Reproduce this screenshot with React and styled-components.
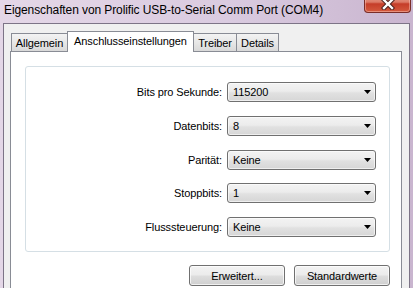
import React from 'react';
import styled, { createGlobalStyle } from 'styled-components';

const GlobalStyle = createGlobalStyle`
  html, body {
    margin: 0;
    padding: 0;
  }
  body {
    font-family: "Liberation Sans", Arial, sans-serif;
  }
`;

const DIALOG_FONT = `
  font-family: "Liberation Sans", Arial, sans-serif;
  font-size: 11px;
  letter-spacing: -0.1px;
  color: #000;
`;

const Window = styled.div`
  width: 413px;
  height: 288px;
  overflow: hidden;
  display: flex;
  flex-direction: column;
  background: linear-gradient(90deg, #e4d7e7 0%, #dacbe0 55%, #c9b5cf 100%);
`;

const TitleBar = styled.div`
  height: 23px;
  flex: none;
  display: flex;
  align-items: flex-start;
`;

const Title = styled.div`
  padding: 3px 0 0 4px;
  font-size: 12px;
  line-height: 14px;
  letter-spacing: -0.1px;
  color: #000;
  white-space: nowrap;
`;

const CloseButton = styled.div`
  box-sizing: border-box;
  margin: -6px 2px 0 auto;
  width: 47px;
  height: 19px;
  border: 1px solid #7a2d28;
  border-top: none;
  border-radius: 0 0 4px 4px;
  background: linear-gradient(#e9a898 0%, #dc7a66 45%, #c53d29 55%, #d45a3e 100%);
  box-shadow: inset 0 0 0 1px rgba(255, 210, 200, 0.45);
  display: flex;
  align-items: center;
  justify-content: center;
  padding-top: 2px;

  svg {
    display: block;
  }
`;

const Body = styled.div`
  flex: 1;
  min-height: 0;
  margin: 0 3px 0 3px;
  border: 1px solid #7d7487;
  border-bottom: none;
  background: #f0f0f0;
  padding: 7px 7px 0 6px;
  display: flex;
  flex-direction: column;
`;

const TabStrip = styled.div`
  display: flex;
  align-items: flex-end;
  height: 21px;
  padding-left: 1px;
  margin-bottom: -1px;
  position: relative;
  z-index: 1;
`;

const Tab = styled.div`
  ${DIALOG_FONT}
  box-sizing: border-box;
  width: ${(p) => p.$w}px;
  height: ${(p) => (p.$active ? 21 : 18)}px;
  margin-left: ${(p) => (p.$first ? 0 : -1)}px;
  margin-bottom: ${(p) => (p.$active ? 0 : 1)}px;
  border: 1px solid #898c95;
  border-bottom: none;
  background: ${(p) =>
    p.$active ? '#fff' : 'linear-gradient(#f3f3f3 0%, #e6e6e6 55%, #d9d9d9 100%)'};
  position: relative;
  z-index: ${(p) => (p.$active ? 2 : 1)};
  display: flex;
  justify-content: center;
  align-items: center;
  padding-bottom: ${(p) => (p.$active ? 3 : 0)}px;
  white-space: nowrap;
`;

const Panel = styled.div`
  flex: 1;
  background: #fff;
  border: 1px solid #898c95;
  border-bottom: none;
  padding: 14px 11px 0 14px;
`;

const Group = styled.div`
  border: 1px solid #d5dfe5;
  border-radius: 3px;
  box-shadow: inset 0 0 0 1px #fff;
  padding: 15px 13px 14px 0;
  display: grid;
  grid-template-columns: 1fr 149px;
  column-gap: 5px;
  row-gap: 13.75px;
  align-items: center;
`;

const Label = styled.div`
  ${DIALOG_FONT}
  text-align: right;
  white-space: nowrap;
`;

const Combo = styled.div`
  ${DIALOG_FONT}
  box-sizing: border-box;
  height: 20px;
  border: 1px solid #707070;
  border-radius: 3px;
  background: linear-gradient(#f3f3f3 0%, #ececec 45%, #e1e1e1 55%, #d6d6d6 100%);
  box-shadow: inset 0 0 0 1px rgba(255, 255, 255, 0.6);
  display: flex;
  align-items: center;
  justify-content: space-between;
  padding: 0 4px 0 5px;

  svg {
    display: block;
  }
`;

const ButtonRow = styled.div`
  display: flex;
  justify-content: flex-end;
  gap: 9px;
  margin-top: 13px;
`;

const Button = styled.div`
  ${DIALOG_FONT}
  box-sizing: border-box;
  width: 96px;
  height: 21px;
  border: 1px solid #707070;
  border-radius: 3px;
  background: linear-gradient(#f3f3f3 0%, #ececec 45%, #dddddd 55%, #cfcfcf 100%);
  box-shadow: inset 0 0 0 1px rgba(255, 255, 255, 0.7);
  display: flex;
  align-items: center;
  justify-content: center;
`;

const CloseGlyph = () => (
  <svg width="14" height="12" viewBox="0 0 14 12">
    <path d="M3 2 L11 10 M11 2 L3 10" stroke="#4a1f1c" strokeWidth="4.4" strokeLinecap="square" />
    <path d="M3 2 L11 10 M11 2 L3 10" stroke="#fff" strokeWidth="2.4" strokeLinecap="square" />
  </svg>
);

const Arrow = () => (
  <svg width="7" height="4" viewBox="0 0 7 4">
    <path d="M0 0 H7 L3.5 4 Z" fill="#000" />
  </svg>
);

const tabs = [
  { label: 'Allgemein', w: 57 },
  { label: 'Anschlusseinstellungen', w: 127, active: true },
  { label: 'Treiber', w: 44 },
  { label: 'Details', w: 43 },
];

const settings = [
  { label: 'Bits pro Sekunde:', value: '115200' },
  { label: 'Datenbits:', value: '8' },
  { label: 'Parität:', value: 'Keine' },
  { label: 'Stoppbits:', value: '1' },
  { label: 'Flusssteuerung:', value: 'Keine' },
];

export default function App() {
  return (
    <>
      <GlobalStyle />
      <Window>
        <TitleBar>
          <Title>Eigenschaften von Prolific USB-to-Serial Comm Port (COM4)</Title>
          <CloseButton>
            <CloseGlyph />
          </CloseButton>
        </TitleBar>
        <Body>
          <TabStrip>
            {tabs.map((t, i) => (
              <Tab key={t.label} $w={t.w} $active={t.active} $first={i === 0}>
                {t.label}
              </Tab>
            ))}
          </TabStrip>
          <Panel>
            <Group>
              {settings.map((s) => (
                <React.Fragment key={s.label}>
                  <Label>{s.label}</Label>
                  <Combo>
                    <span>{s.value}</span>
                    <Arrow />
                  </Combo>
                </React.Fragment>
              ))}
            </Group>
            <ButtonRow>
              <Button>Erweitert...</Button>
              <Button>Standardwerte</Button>
            </ButtonRow>
          </Panel>
        </Body>
      </Window>
    </>
  );
}
